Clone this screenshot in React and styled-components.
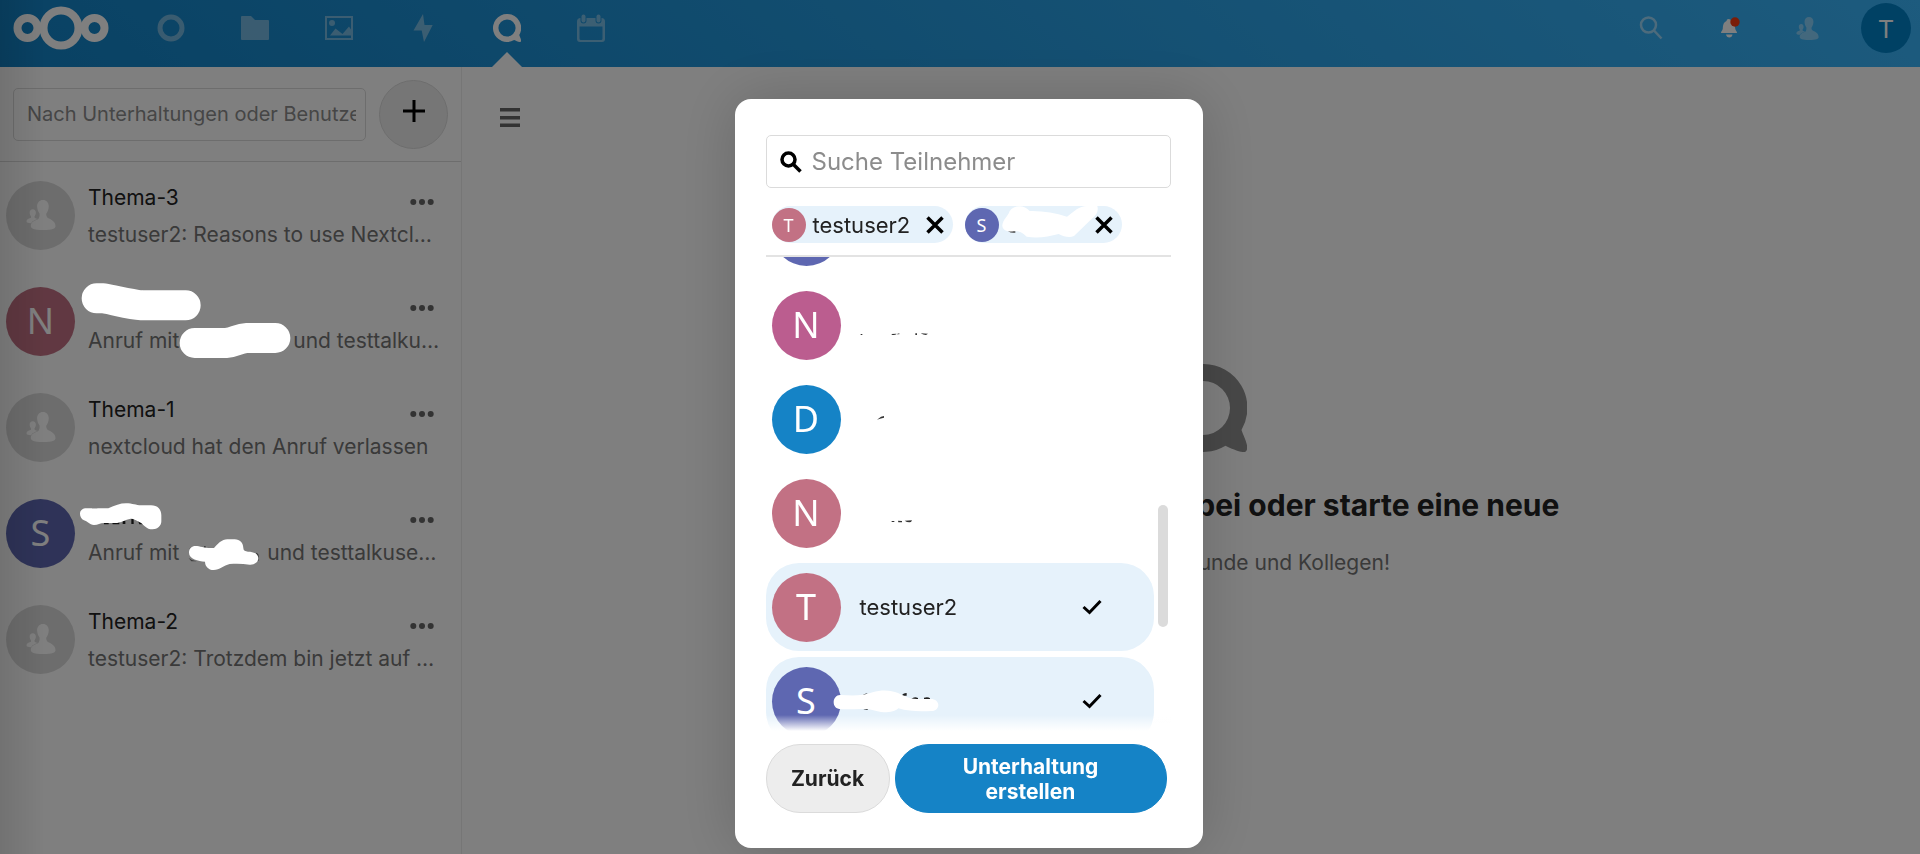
import { useState } from 'react'
import styled, { createGlobalStyle } from 'styled-components'

const GlobalStyle = createGlobalStyle`
    * {
        box-sizing: border-box;
    }
    body {
        margin: 0;
        overflow: hidden;
        color: #222;
        background-color: white;
        font-family: Inter, 'Liberation Sans', sans-serif;
        font-size: 21px;
    }
    button, input {
        font: inherit;
        color: inherit;
    }
`

const Page = styled.div`
    display: flex;
    flex-direction: column;
    min-height: 100vh;
`

const Header = styled.header`
    display: flex;
    height: 67px;
    padding-right: 9px;
    background: linear-gradient(40deg, #1283c7 0%, #3ab6fc 100%);
`

const LogoLink = styled.a`
    display: flex;
    align-items: center;
    height: 56px;
    width: 129px;
    padding-left: 13px;
`

const AppNav = styled.nav`
    display: flex;
    flex: 1;
`

const AppLink = styled.a`
    position: relative;
    display: flex;
    justify-content: center;
    align-items: center;
    width: 84px;
    height: 67px;
    padding-bottom: 11px;
    color: white;
    svg {
        opacity: ${({ $active }) => ($active ? 1 : 0.4)};
    }
    &::after {
        content: '';
        display: ${({ $active }) => ($active ? 'block' : 'none')};
        position: absolute;
        bottom: 0;
        border: 15px solid transparent;
        border-top-width: 0;
        border-bottom-color: white;
    }
`

const HeaderButton = styled.button`
    display: flex;
    justify-content: center;
    align-items: center;
    width: 78px;
    height: 56px;
    padding: 0;
    border: 0;
    background: none;
    color: white;
`

const UserButton = styled.button`
    width: 50px;
    height: 50px;
    margin: 3px 0 0 15px;
    padding: 0;
    border: 0;
    border-radius: 50%;
    background-color: #0082c9;
    color: white;
    font-family: 'Noto Sans', sans-serif;
    font-size: 26px;
`

const Body = styled.div`
    display: flex;
    flex: 1;
`

const Sidebar = styled.aside`
    width: 462px;
    border-right: 1px solid #ededed;
`

const SidebarTop = styled.div`
    display: flex;
    align-items: center;
    gap: 13px;
    height: 95px;
    padding: 0 13px;
    border-bottom: 1px solid #dadada;
`

const SidebarSearch = styled.input`
    flex: 1;
    min-width: 0;
    height: 53px;
    padding: 0 9px 0 13px;
    border: 1px solid #dbdbdb;
    border-radius: 5px;
    background: white;
    font-size: 20px;
    &::placeholder {
        color: #8c8c8c;
        opacity: 1;
    }
`

const AddButton = styled.button`
    display: flex;
    justify-content: center;
    align-items: center;
    width: 69px;
    height: 69px;
    padding: 0;
    border: 1px solid #dbdbdb;
    border-radius: 50%;
    background-color: #ededed;
    color: black;
`

const ConversationList = styled.ul`
    margin: 0;
    padding: 0;
    list-style: none;
`

const Conversation = styled.li`
    position: relative;
    display: flex;
    align-items: center;
    gap: 13px;
    height: 106px;
    padding: 0 6px;
`

const Avatar = styled.span`
    display: flex;
    flex: none;
    justify-content: center;
    align-items: center;
    width: ${({ $small }) => ($small ? 34 : 69)}px;
    height: ${({ $small }) => ($small ? 34 : 69)}px;
    border-radius: 50%;
    background-color: ${({ $color }) => $color};
    color: white;
    font-family: 'Noto Sans', sans-serif;
    font-size: ${({ $small }) => ($small ? 18 : 36)}px;
    line-height: 1;
`

const ConversationText = styled.div`
    flex: 1;
    min-width: 0;
    padding-top: 2px;
    line-height: 37px;
    white-space: nowrap;
`

const TitleRow = styled.div`
    display: flex;
    justify-content: space-between;
    height: 37px;
    padding-right: 21px;
`

const MoreButton = styled.button`
    display: flex;
    align-items: center;
    padding: 10px 0 0;
    border: 0;
    background: none;
    height: 36px;
`

const LastMessage = styled.div`
    color: #747474;
`

const Gap = styled.span`
    display: inline-block;
    width: ${({ $width }) => $width}px;
`

/* painted over the dimmed page */
const Marker = styled.svg`
    position: absolute;
    z-index: 20;
    top: 0;
    left: 0;
    pointer-events: none;
`

const Main = styled.main`
    flex: 1;
    display: flex;
    flex-direction: column;
    padding-left: 24px;
`

const MenuButton = styled.button`
    display: flex;
    align-self: flex-start;
    margin: 40px 0 0 14px;
    padding: 0;
    border: 0;
    background: none;
`

const EmptyContent = styled.div`
    display: flex;
    flex-direction: column;
    align-items: center;
    padding-top: 237px;
    h2 {
        margin: 33px 0 0;
        font-size: 30px;
        line-height: 40px;
        font-weight: 700;
    }
    p {
        margin: 23px 0 0;
        line-height: 30px;
        color: #747474;
    }
`

const Mask = styled.div`
    position: fixed;
    inset: 0;
    z-index: 10;
    display: flex;
    justify-content: center;
    align-items: flex-start;
    padding: 99px 0 0 17px;
    background:
        linear-gradient(90deg, rgba(0, 0, 0, 0.1), transparent 45px),
        rgba(0, 0, 0, 0.5);
`

const Modal = styled.section`
    width: 468px;
    padding: 36px 32px 35px 31px;
    border-radius: 16px;
    background-color: white;
    box-shadow: 0 0 60px rgba(0, 0, 0, 0.18);
    font-size: 22px;
`

const SearchField = styled.label`
    display: flex;
    align-items: center;
    gap: 10px;
    height: 53px;
    padding-left: 13px;
    border: 1px solid #dbdbdb;
    border-radius: 5px;
    input {
        flex: 1;
        min-width: 0;
        border: 0;
        outline: 0;
        padding: 0;
        background: none;
        font-size: 24px;
    }
    input::placeholder {
        color: #8c8c8c;
        opacity: 1;
    }
`

const Chips = styled.div`
    display: flex;
    gap: 12px;
    height: 69px;
    padding: 18px 0 0 6px;
    border-bottom: 2px solid #e3e3e3;
`

const Chip = styled.div`
    position: relative;
    display: flex;
    align-items: center;
    gap: 7px;
    width: ${({ $width }) => $width}px;
    height: 37px;
    border-radius: 19px;
    background-color: #e6f2fb;
    button {
        display: flex;
        margin-left: auto;
        margin-right: 9px;
        padding: 0;
        border: 0;
        background: none;
    }
`

const ListArea = styled.div`
    position: relative;
    height: 476px;
    overflow: hidden;
    &::after {
        content: '';
        position: absolute;
        left: 0;
        right: 0;
        bottom: 0;
        height: 18px;
        background: linear-gradient(rgba(255, 255, 255, 0), white 16px);
    }
`

const Participants = styled.ul`
    display: flex;
    flex-direction: column;
    gap: 6px;
    margin: -70px 17px 0 0;
    padding: 0;
    list-style: none;
`

const Participant = styled.li`
    position: relative;
    display: flex;
    align-items: center;
    gap: 19px;
    height: 88px;
    padding: 0 52px 0 6px;
    border-radius: 33px;
    background-color: ${({ $selected }) => ($selected ? '#e6f2fb' : 'white')};
    > svg:not(${Marker}) {
        margin-left: auto;
    }
`

const Thumb = styled.div`
    position: absolute;
    top: 248px;
    right: 3px;
    width: 10px;
    height: 122px;
    border-radius: 5px;
    background-color: #dbdbdb;
`

const Actions = styled.div`
    display: flex;
    gap: 5px;
    padding: 11px 4px 0 0;
`

const ActionButton = styled.button`
    flex: ${({ $primary }) => ($primary ? '1' : '0 0 124px')};
    height: 69px;
    padding: ${({ $primary }) => ($primary ? '0 60px' : '0')};
    border: 1px solid ${({ $primary }) => ($primary ? '#1583c6' : '#dbdbdb')};
    border-radius: 34px;
    background-color: ${({ $primary }) => ($primary ? '#1583c6' : '#ededed')};
    color: ${({ $primary }) => ($primary ? 'white' : '#222')};
    font-size: 21px;
    font-weight: 700;
    line-height: 25px;
`

const Logo = () => (
    <svg width="96" height="44" viewBox="0 0 96 44" fill="none" stroke="white" strokeWidth="8">
        <circle cx="14.500" cy="22" r="10" />
        <circle cx="48" cy="22" r="17.500" />
        <circle cx="81.500" cy="22" r="10" />
    </svg>
)

const Contacts = ({ size, opacity = 1 }) => (
    <svg width={size} height={size} viewBox="0 0 30 31" fill="white" opacity={opacity}>
        <path d="M17 0c3.600 0 6 2.600 6 6.500 0 3-1 5.500-2.500 7.500-.3 1.500.1 3 1 4C24 20 30 21 30 27c0 2.500-3 4-13 4-9 0-12.500-1.500-12.500-4C4.500 24 6 22 12 20c1.500-1.500 1.700-4 1.500-6C12 12 11 9.500 11 6.500 11 2.600 13.500 0 17 0z" />
        <path d="M6.500 9.500C8.500 9.500 9.700 11 9.700 13c0 1.800-.7 3.300-1.500 4.200 0 1.500 1.800 1.800 3.600 2.300-3.500 1.300-6 2.500-7 4.500C2 24 0 23.500 0 22c0-2.200 2.500-2.600 4-3.300.7-.4.8-.9.800-1.500C4 16.300 3.300 14.800 3.300 13c0-2 1.200-3.500 3.200-3.500z" />
    </svg>
)

const TalkIcon = ({ size, color }) => (
    <svg width={size} height={size} viewBox="0 0 88 88" fill={color}>
        <path
            fillRule="evenodd"
            d="M44 0a44 44 0 1 0 22.500 81.800C72 84.500 81 88.500 85.500 88c3-.5 3-4.500 2.200-8-1-4.500-4-10-5.200-14A44 44 0 0 0 44 0zm0 17a27 27 0 1 1 0 54 27 27 0 0 1 0-54z"
        />
    </svg>
)

const Cross = () => (
    <svg width="18" height="18" viewBox="0 0 18 18" stroke="black" strokeWidth="3.500">
        <path d="M1.500 1.500l15 15M16.500 1.500l-15 15" />
    </svg>
)

const Check = () => (
    <svg width="20" height="16" viewBox="0 0 20 16" fill="none" stroke="black" strokeWidth="3">
        <path d="M1.500 8l6 5.500L18.500 2" />
    </svg>
)

const Dots = () => (
    <svg width="24" height="8" viewBox="0 0 24 8" fill="#666">
        <circle cx="3.300" cy="4" r="3" />
        <circle cx="12" cy="4" r="3" />
        <circle cx="20.700" cy="4" r="3" />
    </svg>
)

const apps = [
    {
        name: 'Dashboard',
        icon: (
            <svg width="28" height="28" viewBox="0 0 28 28" fill="none" stroke="white" strokeWidth="5">
                <circle cx="14" cy="14" r="11" />
            </svg>
        ),
    },
    {
        name: 'Dateien',
        icon: (
            <svg width="28" height="28" viewBox="0 0 28 28" fill="white">
                <path d="M1 2h9l4 4h13q1 0 1 1v18q0 1-1 1H1q-1 0-1-1V3q0-1 1-1z" />
            </svg>
        ),
    },
    {
        name: 'Fotos',
        icon: (
            <svg width="28" height="28" viewBox="0 0 28 28" fill="white">
                <rect x="1" y="3" width="26" height="22" fill="none" stroke="white" strokeWidth="2" />
                <circle cx="7" cy="9" r="3" />
                <path d="M5 21.500L10.500 14.500l7 5.500L24 12.500l2 3V21.500z" />
            </svg>
        ),
    },
    {
        name: 'Aktivität',
        icon: (
            <svg width="28" height="28" viewBox="0 0 28 28" fill="white">
                <path d="M14 0L4.500 16.500h8.200L15 28l8.700-17h-8.200z" />
            </svg>
        ),
    },
    { name: 'Talk', active: true, icon: <TalkIcon size={28} color="white" /> },
    {
        name: 'Kalender',
        icon: (
            <svg width="28" height="28" viewBox="0 0 28 28" fill="white">
                <rect x="4.500" y="0.500" width="4" height="8" rx="2" />
                <rect x="19.500" y="0.500" width="4" height="8" rx="2" />
                <path
                    fillRule="evenodd"
                    d="M3.500 4v2.500a3 3 0 0 0 6 0V4h9v2.500a3 3 0 0 0 6 0V4Q28 4 28 7.500V25q0 3-3 3H3q-3 0-3-3V7.500Q0 4 3.500 4zM2.500 12.500v12q0 1.500 1.500 1.500h20q1.500 0 1.500-1.500v-12z"
                />
            </svg>
        ),
    },
]

const conversations = [
    { title: 'Thema-3', message: 'testuser2: Reasons to use Nextcl…' },
    {
        letter: 'N',
        color: '#c27184',
        message: 'Anruf mit',
        gap: 114,
        rest: 'und testtalku…',
        marker: (
            <Marker width="461" height="106" viewBox="0 324 1383 318" fill="none" stroke="white" strokeWidth="90" strokeLinecap="round" strokeLinejoin="round">
                <path d="M290 415h20C350 422 390 433 425 436H557" />
                <path d="M584 549h94C705 547 715 535 740 534h86" />
            </Marker>
        ),
    },
    { title: 'Thema-1', message: 'nextcloud hat den Anruf verlassen' },
    {
        letter: 'S',
        color: '#5e67b1',
        message: 'Anruf mit',
        gap: 88,
        rest: 'und testtalkuse…',
        marker: (
            <Marker width="461" height="106" viewBox="0 270 1383 318" fill="white">
                <path fill="#111" d="M276 354h16v6h-16zM312 396h14v7h-14zM336 394l22 1v8h-20zM368 392h8v10h-8zM394 384h7v18h-7zM414 392l18 4v7h-14z" />
                <path fill="#3d3d3d" d="M568 476q6-8 20-6v8zM612 468h5v10h-5zM566 504q12 10 24 10h-16zM768 488q8 2 8 8v16h-8z" />
                <path d="M260 355h65C345 346 360 340 378 340c20 0 30 6 45 6h30c20 0 31 12 31 30v18c0 14-12 24-26 24-20 0-26-14-36-20-12-6-20-12-30-12-16 2-30 13-46 13h-34c-12 0-18 6-30 6-14 0-20-12-30-14-8-4-12-12-12-20 0-10 8-16 20-16z" />
                <path d="M586 468c16 0 28 8 56 6 10-12 24-26 40-26h22c16 0 26 12 26 26 0 8 6 10 14 11 18 0 31 6 31 20 0 12-12 20-26 19-20-3-40-3-60-2-18 4-30 18-48 18-16 0-26-12-26-25-20-2-48-8-48-27 0-12 8-20 19-20z" />
            </Marker>
        ),
    },
    { title: 'Thema-2', message: 'testuser2: Trotzdem bin jetzt auf …' },
]

const participants = [
    { id: 0, color: '#5e67b1' },
    {
        id: 1,
        letter: 'N',
        color: '#bb5d8f',
        marker: (
            <Marker width="388" height="88" viewBox="138 96 1164 264" fill="#333">
                <path d="M422 255h5v3h-5zM515 257q8 2 14-1v-2l-14 1zM531 255l7-2v3h-7zM586 253h5v5h-5zM602 253l22 1-6 4q-8 0-16-5z" />
            </Marker>
        ),
    },
    {
        id: 2,
        letter: 'D',
        color: '#1583c6',
        marker: (
            <Marker width="388" height="88" viewBox="138 378 1164 264" fill="#333">
                <path d="M471 512l12-9 9-2v5l-12 3z" />
            </Marker>
        ),
    },
    {
        id: 3,
        letter: 'N',
        color: '#c27184',
        marker: (
            <Marker width="388" height="88" viewBox="138 660 1164 264" fill="#333">
                <path d="M515 816h8v3h-8zM534 815l12 1v4h-11zM554 815l22-1-3 5q-10 2-19-4z" />
            </Marker>
        ),
    },
    { id: 4, letter: 'T', color: '#c27184', name: 'testuser2', selected: true },
    {
        id: 5,
        letter: 'S',
        color: '#5e67b1',
        selected: true,
        marker: (
            <Marker width="388" height="88" viewBox="138 354 1164 264" fill="white">
                <path fill="#222" d="M426 472q6-10 16-8l4 6zM424 506q10 8 20 6l-4-6zM512 486h5v22h-5zM524 492h6v18h-6zM546 470q2-8 14-8v8zM574 480q8-8 20-3v5zM612 476q12-4 18 2v5h-18z" />
                <path d="M360 468c34 2 66 4 98-8 24-8 54-8 76 2 16 8 34 18 56 18h42c14 0 23 8 23 18s-8 18-20 18c-34 1-68 2-100-8-8 8-22 12-44 12-22-2-34-10-54-10-26-1-50 2-78 0-12 0-18-10-18-20 0-12 8-22 19-22z" />
            </Marker>
        ),
    },
]

function App() {
    const [search, setSearch] = useState('')
    const [participantSearch, setParticipantSearch] = useState('')

    return (
        <>
            <GlobalStyle />
            <Page>
                <Header>
                    <LogoLink href="#" aria-label="Nextcloud">
                        <Logo />
                    </LogoLink>
                    <AppNav>
                        {apps.map(({ name, icon, active }) => (
                            <AppLink key={name} href="#" aria-label={name} $active={active}>
                                {icon}
                            </AppLink>
                        ))}
                    </AppNav>
                    <HeaderButton aria-label="Suche">
                        <svg width="24" height="24" viewBox="0 0 24 24" fill="none" stroke="white" strokeWidth="2.500" opacity="0.5">
                            <circle cx="9.500" cy="9" r="7.500" />
                            <path d="M14.500 14L22.500 22.500" />
                        </svg>
                    </HeaderButton>
                    <HeaderButton aria-label="Benachrichtigungen">
                        <svg width="24" height="24" viewBox="0 0 24 24" fill="white">
                            <path d="M11.500 3q-2 0-2 2C6 6.500 6 10 5.800 12.500 5.500 15 4 15 4 17h16c0-2-1.500-2-1.800-4.500C18 10 18 6.500 14 5q0-2-2.500-2zM9 18.500h6.500q-.5 3-3.200 3T9 18.500z" />
                            <circle cx="18" cy="6" r="4.700" fill="#f53b10" />
                        </svg>
                    </HeaderButton>
                    <HeaderButton aria-label="Kontakte">
                        <Contacts size={23} opacity={0.4} />
                    </HeaderButton>
                    <UserButton>T</UserButton>
                </Header>
                <Body>
                    <Sidebar>
                        <SidebarTop>
                            <SidebarSearch
                                aria-label="Unterhaltungen suchen"
                                placeholder="Nach Unterhaltungen oder Benutzern suchen"
                                value={search}
                                onChange={(e) => setSearch(e.target.value)}
                            />
                            <AddButton aria-label="Neue Unterhaltung">
                                <svg width="22" height="28" viewBox="0 0 22 28" stroke="black" strokeWidth="3">
                                    <path d="M11 0v22M0 11h22" />
                                </svg>
                            </AddButton>
                        </SidebarTop>
                        <ConversationList>
                            {conversations.map((c, index) => (
                                <Conversation key={index}>
                                    <Avatar $color={c.color || '#dadada'}>
                                        {c.letter || <Contacts size={30} />}
                                    </Avatar>
                                    <ConversationText>
                                        <TitleRow>
                                            <span>{c.title}</span>
                                            <MoreButton aria-label="Aktionen">
                                                <Dots />
                                            </MoreButton>
                                        </TitleRow>
                                        <LastMessage>
                                            {c.message}
                                            {c.gap && <Gap $width={c.gap} />}
                                            {c.rest}
                                        </LastMessage>
                                    </ConversationText>
                                    {c.marker}
                                </Conversation>
                            ))}
                        </ConversationList>
                    </Sidebar>
                    <Main>
                        <MenuButton aria-label="Navigation">
                            <svg width="20" height="20" viewBox="0 0 20 20" fill="#666">
                                <path d="M0 1h20v3.500H0zM0 9h20v3.500H0zM0 16.500h20V20H0z" />
                            </svg>
                        </MenuButton>
                        <EmptyContent>
                            <TalkIcon size={88} color="#909090" />
                            <h2>Tritt einer Unterhaltung bei oder starte eine neue</h2>
                            <p>Begrüße deine Freunde und Kollegen!</p>
                        </EmptyContent>
                    </Main>
                </Body>
            </Page>
            <Mask>
                <Modal role="dialog" aria-label="Teilnehmer auswählen">
                    <SearchField>
                        <svg width="22" height="22" viewBox="0 0 22 22" fill="none" stroke="black" strokeWidth="3.500">
                            <circle cx="8.500" cy="8.500" r="6.500" />
                            <path d="M12.500 12.500L20.500 20.500" />
                        </svg>
                        <input
                            aria-label="Suche Teilnehmer"
                            placeholder="Suche Teilnehmer"
                            value={participantSearch}
                            onChange={(e) => setParticipantSearch(e.target.value)}
                        />
                    </SearchField>
                    <Chips>
                        <Chip $width={181}>
                            <Avatar $small $color="#c27184">T</Avatar>
                            testuser2
                            <button aria-label="Entfernen"><Cross /></button>
                        </Chip>
                        <Chip $width={157}>
                            <Avatar $small $color="#5e67b1">S</Avatar>
                            <button aria-label="Entfernen"><Cross /></button>
                            <Marker width="157" height="37" viewBox="733 348 471 111" fill="white">
                                <path fill="#444" d="M862 424l22-2v6q-12 2-22-4zM904 422h6v6h-6z" />
                                <path d="M845 405c3-18 17-26 22-42 12-18 44-20 60 0 40-1 76 6 112 17 22-16 36-32 60-32h31c4 16-2 26-14 36l-56 54c-14 6-30 2-46-6-30 8-64 14-96 8-14-12-18-16-34-16-22 2-40-2-39-19z" />
                            </Marker>
                        </Chip>
                    </Chips>
                    <ListArea>
                        <Participants>
                            {participants.map((p) => (
                                <Participant key={p.id} $selected={p.selected}>
                                    <Avatar $color={p.color}>{p.letter}</Avatar>
                                    {p.name}
                                    {p.selected && <Check />}
                                    {p.marker}
                                </Participant>
                            ))}
                        </Participants>
                        <Thumb />
                    </ListArea>
                    <Actions>
                        <ActionButton>Zurück</ActionButton>
                        <ActionButton $primary>Unterhaltung erstellen</ActionButton>
                    </Actions>
                </Modal>
            </Mask>
        </>
    )
}

export default App
